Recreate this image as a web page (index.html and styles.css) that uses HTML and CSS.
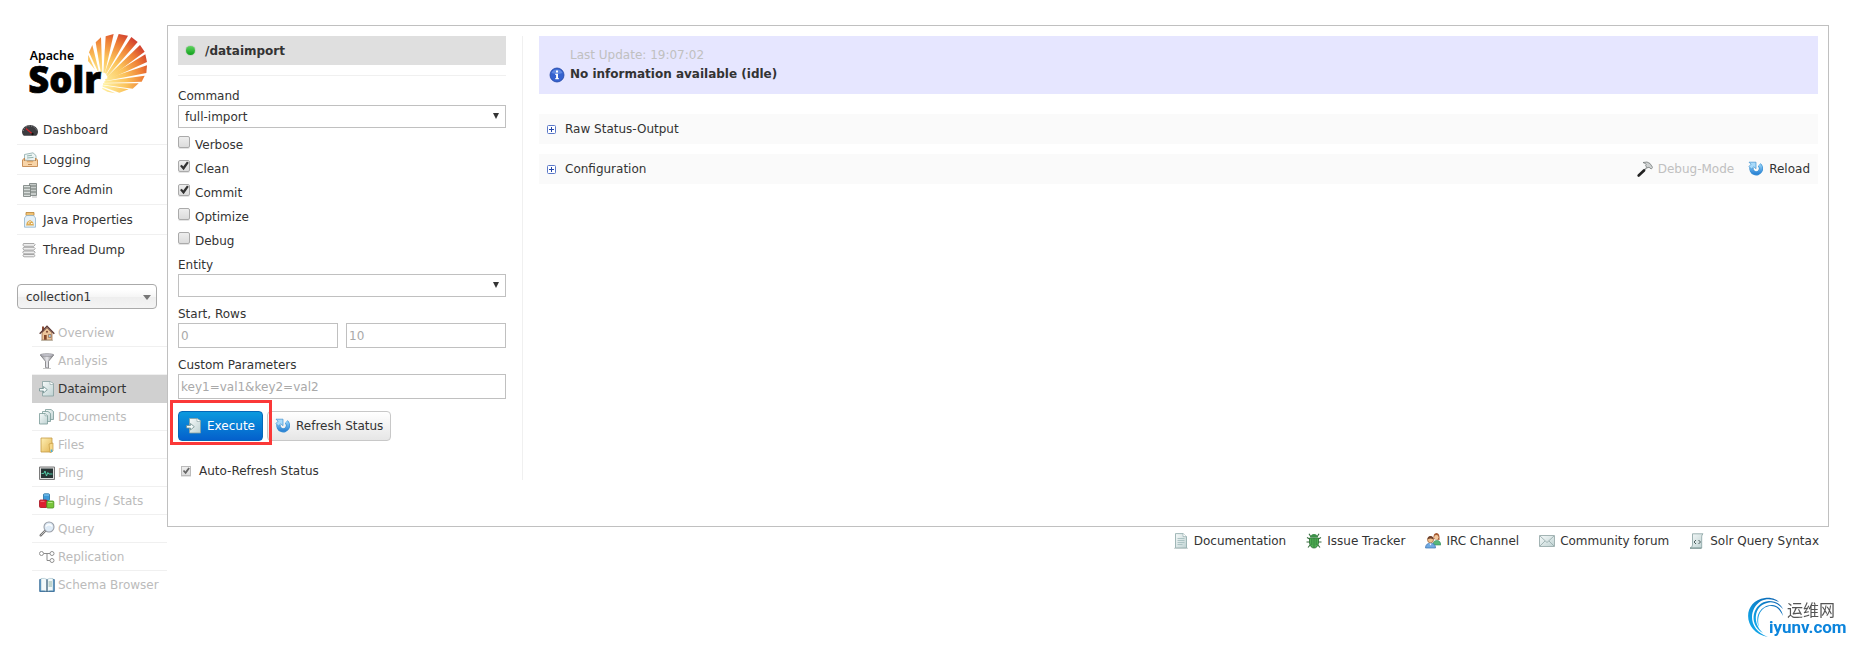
FILE: index.html
```html
<!DOCTYPE html>
<html lang="en">
<head>
    <meta charset="utf-8">
    <title>Solr Admin</title>
    <link rel="stylesheet" href="styles.css">
</head>
<body>
    <!-- icon set -->
    <svg class="sprite" aria-hidden="true">
        <defs>
            <linearGradient id="paper" x1="0" y1="0" x2="1" y2="1">
                <stop offset="0" stop-color="#f6fafa"/><stop offset="1" stop-color="#bfd2d2"/>
            </linearGradient>
            <linearGradient id="blue" x1="0" y1="0" x2="0" y2="1">
                <stop offset="0" stop-color="#8fd0f8"/><stop offset="1" stop-color="#2f86d6"/>
            </linearGradient>
            <linearGradient id="folder" x1="0" y1="0" x2="1" y2="1">
                <stop offset="0" stop-color="#fff0b5"/><stop offset="1" stop-color="#e3b655"/>
            </linearGradient>
            <linearGradient id="metal" x1="0" y1="0" x2="1" y2="0">
                <stop offset="0" stop-color="#8a8a8e"/><stop offset=".5" stop-color="#e6e6ea"/><stop offset="1" stop-color="#77777b"/>
            </linearGradient>
        </defs>
        <symbol id="dashboard" viewBox="0 0 16 16">
            <path d="M0 9.500a8 6.500 0 0 1 16 0c0 2-.8 3.500-1.800 4.200H1.800C.8 13 0 11.500 0 9.500z" fill="#3c3c3f"/>
            <path d="M1.500 9a6.500 5 0 0 1 13 0" fill="none" stroke="#99999c" stroke-dasharray="1 1.500"/>
            <path d="M4 6.500l7 6" stroke="#d3202a" stroke-width="1.200"/>
            <circle cx="10.500" cy="12" r="1.200" fill="#111"/>
        </symbol>
        <symbol id="logging" viewBox="0 0 16 16">
            <path d="M2.500 8V2.500L11 .8l3 2.700V9z" fill="#eef5f5" stroke="#8ba9a9" stroke-width=".8"/>
            <path d="M5 4l5-.8M5 6l6.500-.6" stroke="#93b3ad"/>
            <path d="M.5 8l2-2v3h11V6l2 2v6.500H.5z" fill="#f4c58d" stroke="#bd7e43" stroke-width=".8"/>
            <path d="M1 9h3.500l1 2h5l1-2H15v5H1z" fill="#f8d5a9"/>
            <path d="M6 12.500h4" stroke="#c28d58"/>
        </symbol>
        <symbol id="cores" viewBox="0 0 16 16">
            <path d="M7.500 1.500h7v12h-7z" fill="#c6cbc9" stroke="#747b78" stroke-width=".8"/>
            <path d="M8 4h6M8 7h6M8 10h6" stroke="#6e7673"/>
            <path d="M1.500 3.500h7v11h-7z" fill="#d8dddb" stroke="#747b78" stroke-width=".8"/>
            <path d="M2 6h6M2 9h6M2 12h6" stroke="#6e7673"/>
            <path d="M10 15h5" stroke="#bbb"/>
        </symbol>
        <symbol id="jar" viewBox="0 0 16 16">
            <path d="M4 .5h8v3H4z" fill="#efc173" stroke="#b98335" stroke-width=".8"/>
            <path d="M4.500 3.500h7l2 2.500v9.200h-11V6z" fill="#e4f0f8" stroke="#8fb3cc" stroke-width=".8"/>
            <path d="M5 10l3-2 3 2 1 3.500H4z" fill="#dfad54"/>
            <path d="M6 11h1.500M9 11.500h1.500M7.500 9.500h1" stroke="#fff"/>
        </symbol>
        <symbol id="threads" viewBox="0 0 16 16">
            <path d="M1.500 1.500h10.500q2.500 1-.2 2.800H2q-2-1-.5-2.800zm0 3.800h10.500q2.500 1-.2 2.800H2q-2-1-.5-2.800zm0 3.700h10.500q2.500 1-.2 2.800H2q-2-1-.5-2.800zm0 3.500h10.500q2.500 1-.2 2.300H2q-2-1-.5-2.300z" fill="#eee" stroke="#969696" stroke-width=".8"/>
        </symbol>
        <symbol id="house" viewBox="0 0 16 16">
            <path d="M3 8l5-5 5 5v7H3z" fill="#ecc59b" stroke="#8c5c3c" stroke-width=".7"/>
            <path d="M3 1.500h2V5L3 7z" fill="#8c4a35"/>
            <path d="M.7 8.700L8 1.300l7.300 7.400" fill="none" stroke="#5f3a34" stroke-width="1.500"/>
            <path d="M5 10h2.700v5H5z" fill="#86492b"/>
            <path d="M9.500 9.500H12v3H9.500z" fill="#a9cce2" stroke="#8c5c3c" stroke-width=".6"/>
            <circle cx="8" cy="6.800" r="1" fill="#7d4631"/>
            <path d="M2 15.300h12" stroke="#b9b09f"/>
        </symbol>
        <symbol id="funnel" viewBox="0 0 16 16">
            <path d="M1.300 2l5.200 6.300v6.200l3 .8v-7L14.700 2z" fill="url(#metal)" stroke="#77777b" stroke-width=".8"/>
            <ellipse cx="8" cy="2" rx="6.800" ry="1.300" fill="#c9c9d2" stroke="#85858a" stroke-width=".7"/>
            <path d="M4 15.500h8" stroke="#bbb" stroke-width=".8"/>
        </symbol>
        <symbol id="import" viewBox="0 0 16 16">
            <path d="M3.500.5H11l3.500 2v12.500h-11z" fill="url(#paper)" stroke="#86a0a0" stroke-width=".8"/>
            <path d="M11 .5v3h3.500" fill="#fff" stroke="#86a0a0" stroke-width=".6"/>
            <path d="M.5 7.500h4v-2L8.300 8.700 4.500 12v-2h-4z" fill="#f4fafa" stroke="#6e8e8e" stroke-width=".8"/>
        </symbol>
        <symbol id="documents" viewBox="0 0 16 16">
            <path d="M6.500.5H12l2.500 2v8h-8z" fill="url(#paper)" stroke="#7a9a98" stroke-width=".8"/>
            <path d="M3.500 2.500H9l2.500 2v8h-8z" fill="url(#paper)" stroke="#7a9a98" stroke-width=".8"/>
            <path d="M.5 4.500H6l2.500 2V15h-8z" fill="url(#paper)" stroke="#7a9a98" stroke-width=".8"/>
            <path d="M6 4.500v2.300h2.500" fill="#fff" stroke="#7a9a98" stroke-width=".6"/>
        </symbol>
        <symbol id="folder-icon" viewBox="0 0 16 16">
            <path d="M2 1h11v14H2z" fill="url(#folder)" stroke="#c49a42" stroke-width=".8"/>
            <path d="M10 7l4-1v8l-3 1.500z" fill="#f7d98a" stroke="#c49a42" stroke-width=".7"/>
            <path d="M11.800 12.500h1.500v2.500h-1.500z" fill="#43b1e8"/>
        </symbol>
        <symbol id="ping" viewBox="0 0 16 16">
            <path d="M.5 2h15v12.500H.5z" fill="#dcdcdc" stroke="#7b7b7b"/>
            <path d="M2 3.500h12V13H2z" fill="#273434"/>
            <path d="M2.500 8.500h2.300L6 6l1.500 5 1.300-3.500 1 1.500h3.700" fill="none" stroke="#56d9b1" stroke-width=".9"/>
        </symbol>
        <symbol id="blocks" viewBox="0 0 16 16">
            <rect x="4.500" y=".8" width="6" height="6.700" rx="1" fill="#3e9ad8" stroke="#246d9e" stroke-width=".8"/>
            <path d="M5 2h5" stroke="#8ccdf3"/>
            <rect x=".5" y="7" width="7.500" height="7.500" rx="1" fill="#dd2030" stroke="#a50f1c" stroke-width=".8"/>
            <path d="M1.500 8.300h4" stroke="#f2777e"/>
            <rect x="7.800" y="8" width="7" height="7" rx="1" fill="#79c53b" stroke="#458f1a" stroke-width=".8"/>
            <path d="M9 9.500h4.500" stroke="#b8e88d"/>
        </symbol>
        <symbol id="magnifier" viewBox="0 0 16 16">
            <path d="M6.500 9.500l-4.800 4.800" stroke="#737373" stroke-width="2.400" stroke-linecap="round"/>
            <path d="M6.500 9.500l-4.800 4.800" stroke="#d8d8d8" stroke-width=".8"/>
            <circle cx="10" cy="6" r="5" fill="#deebf7" stroke="#9a9fa8" stroke-width="1.100"/>
            <path d="M7 5.500a3.300 3 0 0 1 6 0" fill="none" stroke="#fff" stroke-width="1.300"/>
        </symbol>
        <symbol id="nodes" viewBox="0 0 16 16">
            <path d="M4.500 4.500h7M8 4.500v7h3" fill="none" stroke="#8b8b8b"/>
            <circle cx="2.500" cy="4.500" r="2" fill="#fff" stroke="#929292"/>
            <circle cx="13" cy="4.500" r="2" fill="#fff" stroke="#929292"/>
            <circle cx="13" cy="11.500" r="2" fill="#fff" stroke="#929292"/>
        </symbol>
        <symbol id="book" viewBox="0 0 16 16">
            <path d="M.7 2.500h14.600v12H.7z" fill="#4b8cc4" stroke="#2e6491" stroke-width=".8"/>
            <path d="M2 1.500q4-.7 6 1 2-1.700 6-1v12q-4-.5-6 1-2-1.500-6-1z" fill="#f3f9fb" stroke="#98b8c4" stroke-width=".6"/>
            <path d="M9.500 5H13M9.500 7H13M9.500 9H13" stroke="#8fb1a2"/>
            <path d="M8 2.500V15" stroke="#28506f" stroke-width="1.200"/>
        </symbol>
        <symbol id="refresh" viewBox="0 0 16 16">
            <path d="M11.200 3.800a4.800 4.800 0 1 1-7.600 2.400" fill="none" stroke="#3a8fd2" stroke-width="4.200"/>
            <path d="M11.200 3.800a4.800 4.800 0 1 1-7.600 2.400" fill="none" stroke="url(#blue)" stroke-width="3"/>
            <path d="M1 1.200h7v6.500L5.800 5.800 3.500 8 1 5.500 3 3.200z" fill="#a8dafa" stroke="#4292d0" stroke-width=".7"/>
        </symbol>
        <symbol id="hammer" viewBox="0 0 16 16">
            <path d="M11 5.500L1.500 14.500" stroke="#9b9f9f" stroke-width="1.500"/>
            <path d="M7 9.500l-5.300 5" stroke="#222" stroke-width="2.600" stroke-linecap="round"/>
            <path d="M6 1.500q4.500-1.500 7 1l2.700 4-1.500 1.500-2.200-1.800-1.500.6-2-2 .8-1.300q-1-1.200-3.300-2z" fill="#cfd2d2" stroke="#777c7c" stroke-width=".8"/>
        </symbol>
        <symbol id="info" viewBox="0 0 16 16">
            <circle cx="8" cy="8" r="7" fill="#3461cf" stroke="#2145a5" stroke-width=".8"/>
            <path d="M2.500 6a5.800 5 0 0 1 11 0q-5 2-11 0z" fill="#6f97ea" opacity=".7"/>
            <path d="M7 3.500h2v2H7zM6.300 6.700H9V11h.8v1.200H6.300V11h.8V7.900h-.8z" fill="#fff"/>
        </symbol>
        <symbol id="plus" viewBox="0 0 9 9">
            <rect x=".5" y=".5" width="8" height="8" rx="1" fill="#fff" stroke="#5b79c9"/>
            <path d="M2 4.500h5M4.500 2v5" stroke="#2447a8"/>
        </symbol>
        <symbol id="doc" viewBox="0 0 16 16">
            <path d="M2.500.6H10l3.500 3V15h-11z" fill="url(#paper)" stroke="#8aa6a6" stroke-width=".8"/>
            <path d="M10 .6v3h3.500" fill="#fff" stroke="#8aa6a6" stroke-width=".6"/>
            <path d="M4.500 5.500h7M4.500 7.500h7M4.500 9.500h7M4.500 11.500h5" stroke="#a7bfbf" stroke-width=".9"/>
            <path d="M1 15.300h14" stroke="#b6c4c4" stroke-width=".8"/>
        </symbol>
        <symbol id="bug" viewBox="0 0 16 16">
            <path d="M5 4L3 .8M11 4l2-3.200M4.500 6.500L1 4.500M11.500 6.500L15 4.500M4 9H.5M12 9h3.500M4.500 11.500L2 14.500M11.500 11.500l2.500 3" stroke="#386d3f" stroke-width="1.100"/>
            <path d="M4.500 4.500q0-3.500 3.500-3.500t3.500 3.500z" fill="#3d9149"/>
            <path d="M3.500 5h9v5q-1 5-4.500 5t-4.500-5z" fill="#50ae54" stroke="#276c30" stroke-width=".8"/>
            <path d="M8 5v9.500M5.800 6v6M10.200 6v6" stroke="#2e7e39" stroke-width=".8"/>
        </symbol>
        <symbol id="people" viewBox="0 0 16 16">
            <path d="M8.500 6q-.5-6 3-6 3.500 0 3 7z" fill="#a65a32"/>
            <circle cx="11.300" cy="4.300" r="2.200" fill="#f3c79c"/>
            <path d="M8 12q0-4.500 4-4.500 3.500 0 3.800 4.500z" fill="#55b77b" stroke="#2f8856" stroke-width=".6"/>
            <circle cx="5.500" cy="6.800" r="3" fill="#f2c18f" stroke="#975b34" stroke-width=".7"/>
            <path d="M2.500 6.500q0-3.500 3-3.500t3 3.500q-3-2-6 0z" fill="#6e402a"/>
            <path d="M.5 15q0-4.800 5-4.800t5 4.800z" fill="#6fa9e2" stroke="#3b73b0" stroke-width=".7"/>
            <path d="M4.300 10.500l1.200 2 1.200-2z" fill="#fff"/>
        </symbol>
        <symbol id="mail" viewBox="0 0 16 16">
            <path d="M.5 2.500h15v11H.5z" fill="url(#paper)" stroke="#9aabab" stroke-width=".9"/>
            <path d="M1 3l7 6.500L15 3M1 13l5-5M15 13l-5-5" fill="none" stroke="#93a8a8" stroke-width=".8"/>
        </symbol>
        <symbol id="script" viewBox="0 0 16 16">
            <path d="M3.500.8h10.500q-1.300 1-1.300 3V15H1q2.500-.7 2.500-3z" fill="url(#paper)" stroke="#87a0a0" stroke-width=".8"/>
            <path d="M7 7L5 9l2 2M9.500 7l2 2-2 2" fill="none" stroke="#4d5f5f"/>
            <path d="M1 15.200h11.500" stroke="#76908f"/>
        </symbol>
    </svg>

    <div class="page">
        <div class="sidebar">
            <a class="logo" href="#" aria-label="Apache Solr">
                <svg width="125" height="67" viewBox="75 30 375 201">
                    <defs>
                        <radialGradient id="sun" gradientUnits="userSpaceOnUse" cx="295" cy="195" r="190">
                            <stop offset=".1" stop-color="#fff0a0"/>
                            <stop offset=".45" stop-color="#fbc25a"/>
                            <stop offset=".72" stop-color="#ee7e35"/>
                            <stop offset="1" stop-color="#c4242c"/>
                        </radialGradient>
                    </defs>
                    <g fill="url(#sun)">
                        <path d="M264 123l1-18 20 44z"/>
                        <path d="M267 97l10-22 19 76-3 2z"/>
                        <path d="M287 67l16-15 4 107-5-3z"/>
                        <path d="M317 49l24-7-26 116-5 0z"/>
                        <path d="M356 42l28 5-65 115-5-3z"/>
                        <path d="M394 51l19 15-90 103-5-4z"/>
                        <path d="M420 75l14 20-109 81-4-6z"/>
                        <path d="M436 103l5 23-117 53-3-6z"/>
                        <path d="M441 136l-2 23-122 24-2-5z"/>
                        <path d="M434 167l-9 18-112 4v-5z"/>
                        <path d="M416 190l-18 16-89-12v-4z"/>
                        <path d="M386 208l-28 10-50-18v-4z"/>
                        <path d="M346 220l-24-5-15-8v-4z"/>
                    </g>
                    <text class="logo-apache" x="89" y="119">Apache</text>
                    <text class="logo-solr" x="85" y="218">Solr</text>
                </svg>
            </a>
            <ul class="menu">
                <li><a href="#"><svg class="icon"><use href="#dashboard"/></svg>Dashboard</a></li>
                <li><a href="#"><svg class="icon"><use href="#logging"/></svg>Logging</a></li>
                <li><a href="#"><svg class="icon"><use href="#cores"/></svg>Core Admin</a></li>
                <li><a href="#"><svg class="icon"><use href="#jar"/></svg>Java Properties</a></li>
                <li><a href="#"><svg class="icon"><use href="#threads"/></svg>Thread Dump</a></li>
            </ul>
            <div class="select core-select">
                <select aria-label="Core Selector"><option>collection1</option></select>
            </div>
            <ul class="menu submenu">
                <li><a href="#"><svg class="icon"><use href="#house"/></svg>Overview</a></li>
                <li><a href="#"><svg class="icon"><use href="#funnel"/></svg>Analysis</a></li>
                <li class="active"><a href="#"><svg class="icon"><use href="#import"/></svg>Dataimport</a></li>
                <li><a href="#"><svg class="icon"><use href="#documents"/></svg>Documents</a></li>
                <li><a href="#"><svg class="icon"><use href="#folder-icon"/></svg>Files</a></li>
                <li><a href="#"><svg class="icon"><use href="#ping"/></svg>Ping</a></li>
                <li><a href="#"><svg class="icon"><use href="#blocks"/></svg>Plugins / Stats</a></li>
                <li><a href="#"><svg class="icon"><use href="#magnifier"/></svg>Query</a></li>
                <li><a href="#"><svg class="icon"><use href="#nodes"/></svg>Replication</a></li>
                <li><a href="#"><svg class="icon"><use href="#book"/></svg>Schema Browser</a></li>
            </ul>
        </div>

        <div class="main">
            <div class="content">
                <form class="import-form" onsubmit="return false">
                    <h2><span class="status-dot"></span>/dataimport</h2>
                    <div class="fields">
                        <div class="field">
                            <label for="command">Command</label>
                            <div class="select">
                                <select id="command"><option>full-import</option><option>delta-import</option></select>
                            </div>
                        </div>
                        <div class="checks">
                            <label><input type="checkbox">Verbose</label>
                            <label><input type="checkbox" checked>Clean</label>
                            <label><input type="checkbox" checked>Commit</label>
                            <label><input type="checkbox">Optimize</label>
                            <label><input type="checkbox">Debug</label>
                        </div>
                        <div class="field">
                            <label for="entity">Entity</label>
                            <div class="select">
                                <select id="entity"><option></option></select>
                            </div>
                        </div>
                        <div class="field">
                            <label for="start">Start, Rows</label>
                            <div class="pair">
                                <input type="text" id="start" placeholder="0">
                                <input type="text" id="rows" placeholder="10" aria-label="Rows">
                            </div>
                        </div>
                        <div class="field">
                            <label for="custom">Custom Parameters</label>
                            <input type="text" id="custom" placeholder="key1=val1&amp;key2=val2">
                        </div>
                    </div>
                    <div class="buttons">
                        <div class="marked">
                            <button class="primary" type="submit"><svg class="icon"><use href="#import"/></svg>Execute</button>
                        </div>
                        <button type="button"><svg class="icon"><use href="#refresh"/></svg>Refresh Status</button>
                    </div>
                    <label class="auto-refresh"><input type="checkbox" checked>Auto-Refresh Status</label>
                </form>

                <div class="result">
                    <div class="status">
                        <div class="last-update">Last Update: 19:07:02</div>
                        <div class="message"><svg class="icon"><use href="#info"/></svg>No information available (idle)</div>
                    </div>
                    <div class="block">
                        <a href="#"><svg class="toggle"><use href="#plus"/></svg>Raw Status-Output</a>
                    </div>
                    <div class="block">
                        <a href="#"><svg class="toggle"><use href="#plus"/></svg>Configuration</a>
                        <div class="actions">
                            <a class="off" href="#"><svg class="icon"><use href="#hammer"/></svg>Debug-Mode</a>
                            <a href="#"><svg class="icon"><use href="#refresh"/></svg>Reload</a>
                        </div>
                    </div>
                </div>
            </div>

            <div class="footer">
                <a href="#"><svg class="icon"><use href="#doc"/></svg>Documentation</a>
                <a href="#"><svg class="icon"><use href="#bug"/></svg>Issue Tracker</a>
                <a href="#"><svg class="icon"><use href="#people"/></svg>IRC Channel</a>
                <a href="#"><svg class="icon"><use href="#mail"/></svg>Community forum</a>
                <a href="#"><svg class="icon"><use href="#script"/></svg>Solr Query Syntax</a>
            </div>
        </div>
    </div>

    <div class="watermark">
        <svg width="100" height="44" viewBox="0 0 100 44">
            <defs>
                <linearGradient id="swirl" x1="0" y1="1" x2="1" y2="0">
                    <stop offset="0" stop-color="#12b5f5"/><stop offset="1" stop-color="#0b5fae"/>
                </linearGradient>
            </defs>
            <g fill="url(#swirl)">
                <path d="M21 40C-5 35-5 4 18 1c7-1 12 2 14 4C26 2 20 1 14 4 1 12 1 33 21 40z"/>
                <path d="M16 36C0 27 6 5 22 4c8 0 12 4 14 8C31 7 26 4 20 6 7 9 5 26 16 36z"/>
                <path d="M12 30C7 19 14 8 25 8c6 0 10 5 11 11-3-6-6-10-12-10-9 0-15 9-12 21z"/>
            </g>
            <text class="wm-name" x="40" y="19">运维网</text>
            <text class="wm-site" x="22" y="36">iyunv.com</text>
        </svg>
    </div>
</body>
</html>
```

FILE: styles.css
```css
* {
    box-sizing: border-box;
}
body {
    margin: 0;
    background-color: #fff;
    color: #333;
    font-family: "DejaVu Sans", Verdana, sans-serif;
    font-size: 12px;
    line-height: 18px;
}
a {
    color: #333;
    text-decoration: none;
}
ul {
    list-style: none;
    margin: 0;
    padding: 0;
}
input, select, button {
    font: inherit;
    color: inherit;
}
.sprite {
    position: absolute;
    width: 0;
    height: 0;
}
.icon {
    flex: none;
    width: 16px;
    height: 16px;
}
.page {
    display: flex;
    align-items: flex-start;
    padding: 25px 22px 0 17px;
}

/* sidebar */
.sidebar {
    flex: none;
    width: 150px;
}
.logo {
    display: block;
    padding: 5px 8px 18px;
}
.logo svg {
    display: block;
    overflow: visible;
}
.logo-apache {
    font: 600 37px "Noto Sans", sans-serif;
}
.logo-solr {
    font: 800 109px "Open Sans", sans-serif;
    stroke: #000;
    stroke-width: 2px;
}
.menu li {
    border-bottom: 1px solid #f0f0f0;
}
.menu li:last-child {
    border-bottom-color: transparent;
}
.menu a {
    display: flex;
    align-items: center;
    gap: 5px;
    height: 29px;
    padding-left: 5px;
}
.submenu {
    margin: 10px 0 0 15px;
}
.submenu a {
    gap: 3px;
    height: 27px;
    padding-left: 7px;
    color: #bbb;
}
.submenu .active {
    background-color: #d0d0d0;
    border-color: #d0d0d0;
}
.submenu .active a {
    color: #333;
}

/* form controls */
.select {
    position: relative;
}
.select::after {
    content: "";
    position: absolute;
    top: 8px;
    right: 7px;
    border: 3px solid transparent;
    border-top: 6px solid #333;
    border-bottom: 0;
    pointer-events: none;
}
select {
    appearance: none;
    display: block;
    width: 100%;
    height: 23px;
    padding: 0 6px;
    border: 1px solid #c0c0c0;
    border-radius: 0;
    background-color: #fff;
}
.core-select {
    width: 140px;
    margin-top: 19px;
}
.core-select::after {
    top: 11px;
    right: 6px;
    border-width: 5px 4px 0;
    border-top-color: #777;
}
.core-select select {
    height: 25px;
    padding: 0 8px;
    border-color: #aaa;
    border-radius: 4px;
    background: linear-gradient(#fff 20%, #f6f6f6 50%, #eee 52%, #f4f4f4);
}
input[type="text"] {
    width: 100%;
    height: 25px;
    padding: 0 2px;
    border: 1px solid #c0c0c0;
}
input::placeholder {
    color: #a9a9a9;
}
input[type="checkbox"] {
    appearance: none;
    flex: none;
    width: 12px;
    height: 12px;
    margin: 0;
    border: 1px solid #aaa;
    border-radius: 2px;
    background: linear-gradient(#eee, #dcdcdc);
    box-shadow: 0 1px 0 #e4e4e4;
}
input[type="checkbox"]:checked::after {
    content: "";
    display: block;
    width: 10px;
    height: 10px;
    background-color: #333;
    clip-path: polygon(10% 50%, 28% 38%, 42% 56%, 80% 5%, 98% 18%, 46% 92%);
}

/* main panel */
.main {
    flex: 1;
    min-width: 0;
}
.content {
    display: flex;
    align-items: flex-start;
    padding: 10px 10px 46px;
    border: 1px solid #c0c0c0;
}
.import-form {
    flex: none;
    width: 345px;
    padding-right: 16px;
    border-right: 1px solid #f0f0f0;
}
.import-form h2 {
    display: flex;
    align-items: center;
    gap: 10px;
    height: 29px;
    margin: 0 0 10px;
    padding-left: 8px;
    background-color: #dfdfdf;
    font-size: 12px;
}
.status-dot {
    width: 9px;
    height: 9px;
    border-radius: 50%;
    background: linear-gradient(#5fd45f, #0fa01c);
    box-shadow: 0 0 1px #0b7d14;
}
.fields {
    padding-top: 11px;
    border-top: 1px solid #f0f0f0;
}
.field > label {
    display: block;
}
.field + .field {
    margin-top: 8px;
}
.checks {
    margin: 5px 0 3px;
}
.checks label {
    display: flex;
    gap: 5px;
    height: 24px;
    line-height: 24px;
}
.checks input {
    margin-top: 3px;
}
.pair {
    display: flex;
    gap: 8px;
}
.buttons {
    display: flex;
    gap: 4px;
    margin-top: 12px;
}
.marked {
    position: relative;
}
.marked::after {
    content: "";
    position: absolute;
    inset: -11px -9px -4px -8px;
    border: 3px solid #fb3838;
    pointer-events: none;
}
button {
    display: flex;
    align-items: center;
    gap: 5px;
    height: 30px;
    padding: 0 7px;
    border: 1px solid #c8c8c8;
    border-radius: 4px;
    background: linear-gradient(#fff, #e6e6e6);
}
button.primary {
    border-color: #0468b8;
    background: linear-gradient(#0c9ade, #0460cc);
    color: #fff;
}
.auto-refresh {
    display: flex;
    align-items: center;
    gap: 8px;
    margin-top: 21px;
    padding-left: 3px;
}
.auto-refresh input[type="checkbox"] {
    width: 10px;
    height: 10px;
    border-color: #bbb;
    border-radius: 0;
}
.auto-refresh input[type="checkbox"]:checked::after {
    width: 8px;
    height: 8px;
    background-color: #666;
}

/* result */
.result {
    flex: 1;
    padding-left: 16px;
}
.status {
    margin-bottom: 20px;
    padding: 10px;
    background-color: #e6e6ff;
    line-height: 19px;
}
.last-update {
    padding-left: 21px;
    color: #c0c0c0;
}
.message {
    display: flex;
    align-items: center;
    gap: 5px;
    font-weight: bold;
}
.block {
    display: flex;
    align-items: center;
    justify-content: space-between;
    height: 30px;
    margin-bottom: 10px;
    padding: 0 8px;
    background-color: #fafafa;
}
.block a, .footer a {
    display: flex;
    align-items: center;
    gap: 5px;
}
.block > a {
    gap: 9px;
}
.toggle {
    width: 9px;
    height: 9px;
}
.actions {
    display: flex;
    gap: 14px;
}
.actions .off {
    color: #c0c0c0;
}
.footer {
    display: flex;
    justify-content: flex-end;
    gap: 20px;
    padding: 5px 10px;
}

.watermark {
    position: fixed;
    right: 4px;
    bottom: 4px;
}
.watermark svg {
    display: block;
}
.wm-name {
    font: 16px "Noto Sans CJK SC", sans-serif;
    fill: #555;
}
.wm-site {
    font: 700 17px Roboto, sans-serif;
    fill: #0b84dc;
}
```
